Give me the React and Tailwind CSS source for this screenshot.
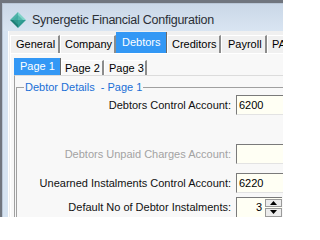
import React from "react";

const mainTabs = [
  { label: "General", w: "w-[50px]", pl: "pl-[5px]" },
  { label: "Company", w: "w-[56px]", pl: "pl-[4px]" },
  { label: "Debtors", w: "w-[51px]", pl: "pl-[6px]", active: true },
  { label: "Creditors", w: "w-[54px]", pl: "pl-[4px]" },
  { label: "Payroll", w: "w-[46px]", pl: "pl-[6px]" },
  { label: "PAYG", w: "w-[50px]", pl: "pl-[4px]" },
];

const subTabs = [
  { label: "Page 1", w: "w-[47px]", pl: "pl-[6px]", active: true },
  { label: "Page 2", w: "w-[43px]", pl: "pl-[3px]" },
  { label: "Page 3", w: "w-[43px]", pl: "pl-[4px]" },
];

const Diamond = () => (
  <svg width="16" height="16" viewBox="0 0 16 16" className="shrink-0">
    <polygon points="8,0 16,8 8,8" fill="#7fd3c8" />
    <polygon points="8,0 0,8 8,8" fill="#4fb3a8" />
    <polygon points="0,8 8,16 8,8" fill="#1f7f76" />
    <polygon points="16,8 8,16 8,8" fill="#2e9a90" />
    <polygon points="8,3 13,8 8,13 3,8" fill="#3aa79c" opacity="0.6" />
  </svg>
);

const Tab = ({ t, h, hActive }) =>
  t.active ? (
    <div
      className={`${t.w} ${t.pl} ${hActive} shrink-0 whitespace-nowrap bg-[#3398f5] text-white flex items-center border-r border-r-[#6a6a6a]`}
    >
      {t.label}
    </div>
  ) : (
    <div
      className={`${t.w} ${t.pl} ${h} shrink-0 whitespace-nowrap text-black flex items-center border-t border-l border-white border-r-2 border-r-[#8c8c8c]`}
    >
      {t.label}
    </div>
  );

const Field = ({ value }) => (
  <div className="h-[20px] w-[60px] shrink-0 border-t border-l border-t-[#7a7a7a] border-l-[#7a7a7a] border-b border-b-[#e3e3e3] bg-[#fffff4] flex items-center pl-[2px]">
    {value}
  </div>
);

const Row = ({ label, muted, children, className = "" }) => (
  <div className={`flex items-center ${className}`}>
    <div
      className={`w-[219px] shrink-0 whitespace-nowrap text-right pr-[5px] ${
        muted ? "text-[#a3a3a3]" : "text-[#111]"
      }`}
    >
      {label}
    </div>
    {children}
  </div>
);

export default function App() {
  return (
    <div
      className="w-[283px] h-[217px] overflow-hidden bg-[#70757e] text-[11px]"
      style={{ fontFamily: '"Liberation Sans", Arial, sans-serif' }}
    >
      <div className="mt-[3px] ml-[2px] w-[300px] h-[214px] bg-[#d6e3f1] border-t border-l border-[#b9c6d6]">
        {/* title bar */}
        <div className="h-[27px] flex items-center gap-[6px] pl-[7px] pt-[5px] bg-gradient-to-b from-[#cad7e7] to-[#d9e5f2]">
          <Diamond />
          <span className="text-[12.5px] tracking-[-0.25px] whitespace-nowrap text-[#2b2f36]">
            Synergetic Financial Configuration
          </span>
        </div>

        {/* window body */}
        <div className="ml-[5px] h-[190px] bg-[#f0f0f0] border-l border-l-white pl-[1px] pt-[1px]">
          {/* main tabs */}
          <div className="flex items-end h-[21px]">
            {mainTabs.map((t) => (
              <Tab key={t.label} t={t} h="h-[18px]" hActive="h-[21px]" />
            ))}
          </div>

          {/* main tab panel */}
          <div className="h-[170px] bg-[#f8f8f8] border-t border-l border-white pl-[3px] pt-[4px]">
            <div className="flex items-end h-[17px]">
              {subTabs.map((t) => (
                <Tab key={t.label} t={t} h="h-[15px]" hActive="h-[17px]" />
              ))}
            </div>

            {/* sub panel */}
            <div className="h-[160px] border-t border-l border-t-[#dcdcdc] border-l-[#a0a0a0] pl-[1px] pt-[5px]">
              <fieldset className="h-[150px] border-t border-l border-[#a0a0a0]">
                <legend className="ml-[7px] px-[1px] text-[#1a6fd6] leading-[12px] whitespace-nowrap">
                  Debtor Details&nbsp; - Page 1
                </legend>

                <Row label="Debtors Control Account:" className="mt-[2px]">
                  <Field value="6200" />
                </Row>
                <Row label="Debtors Unpaid Charges Account:" muted className="mt-[29px]">
                  <Field value="" />
                </Row>
                <Row label="Unearned Instalments Control Account:" className="mt-[9px]">
                  <Field value="6220" />
                </Row>
                <Row label="Default No of Debtor Instalments:" className="mt-[4px]">
                  <div className="h-[20px] w-[46px] shrink-0 border-t border-l border-[#7a7a7a] bg-[#fffff4] flex items-center">
                    <div className="flex-1 text-right pr-[3px]">3</div>
                    <div className="w-[17px] h-[18px] flex flex-col gap-[1px]">
                      <div className="flex-1 bg-[#ececec] border border-[#9a9a9a] flex items-center justify-center">
                        <svg width="7" height="4" viewBox="0 0 7 4">
                          <polygon points="3.5,0 7,4 0,4" fill="#000" />
                        </svg>
                      </div>
                      <div className="flex-1 bg-[#ececec] border border-[#9a9a9a] flex items-center justify-center">
                        <svg width="7" height="4" viewBox="0 0 7 4">
                          <polygon points="0,0 7,0 3.5,4" fill="#000" />
                        </svg>
                      </div>
                    </div>
                  </div>
                </Row>
              </fieldset>
            </div>
          </div>
        </div>
      </div>
    </div>
  );
}
